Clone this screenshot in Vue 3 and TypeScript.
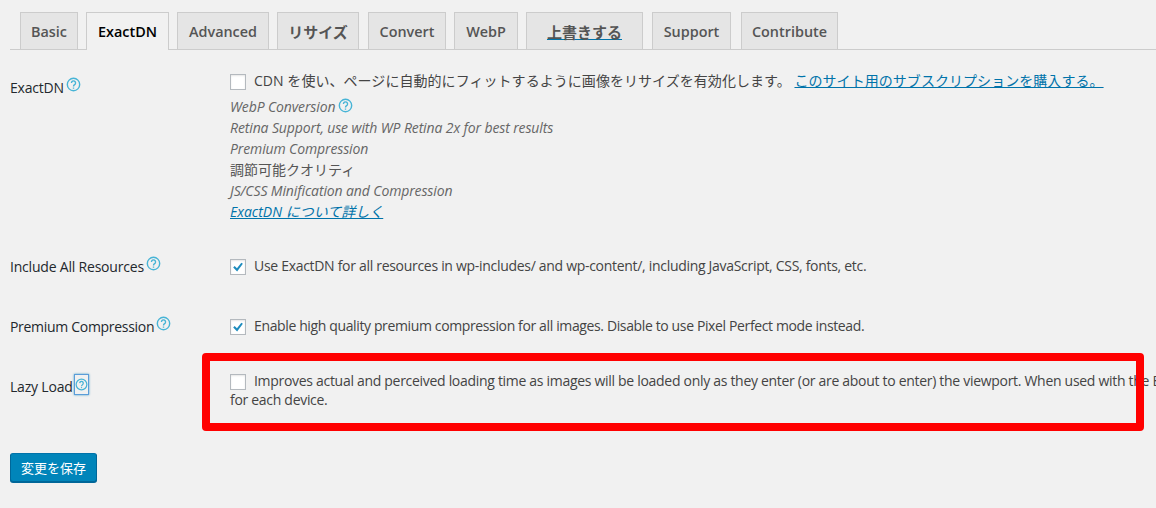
<script setup lang="ts">
interface Tab {
  name: string
  width: number
  after: number
}
const tabs: Tab[] = [
  { name: 'Basic', width: 58, after: 8 },
  { name: 'ExactDN', width: 83, after: 8 },
  { name: 'Advanced', width: 92, after: 8 },
  { name: 'リサイズ', width: 82, after: 9 },
  { name: 'Convert', width: 78, after: 8 },
  { name: 'WebP', width: 64, after: 8 },
  { name: '上書きする', width: 117, after: 9 },
  { name: 'Support', width: 79, after: 10 },
  { name: 'Contribute', width: 97, after: 0 },
]
</script>

<template>
  <div class="page">
    <nav class="tabs">
      <a
        v-for="t in tabs"
        :key="t.name"
        class="tab"
        :class="{ active: t.name === 'ExactDN', under: t.name === '上書きする', jp: t.name === 'リサイズ' || t.name === '上書きする' }"
        :style="{ width: t.width + 'px', marginRight: t.after + 'px' }"
      >{{ t.name }}</a>
    </nav>

    <section class="row exact">
      <div class="label drop7">ExactDN<svg class="help" viewBox="0 0 16 16"><circle cx="8" cy="8" r="6.6" /><path d="M5.8 6.3a2.2 2.2 0 1 1 3.4 1.9c-.8.5-1.2 1-1.2 1.9" /><path d="M8 11.2v1.3" /></svg></div>
      <div class="field">
        <p class="line first"><span class="box"></span>CDN を使い、ページに自動的にフィットするように画像をリサイズを有効化します。 <a class="link">このサイト用のサブスクリプションを購入する。</a></p>
        <p class="line em">WebP Conversion<svg class="help small" viewBox="0 0 16 16"><circle cx="8" cy="8" r="6.6" /><path d="M5.8 6.3a2.2 2.2 0 1 1 3.4 1.9c-.8.5-1.2 1-1.2 1.9" /><path d="M8 11.2v1.3" /></svg></p>
        <p class="line em">Retina Support, use with WP Retina 2x for best results</p>
        <p class="line em">Premium Compression</p>
        <p class="line soft">調節可能クオリティ</p>
        <p class="line em">JS/CSS Minification and Compression</p>
        <p class="line em plain"><a class="link">ExactDN について詳しく</a></p>
      </div>
    </section>

    <section class="row include">
      <div class="label">Include All Resources<svg class="help" viewBox="0 0 16 16"><circle cx="8" cy="8" r="6.6" /><path d="M5.8 6.3a2.2 2.2 0 1 1 3.4 1.9c-.8.5-1.2 1-1.2 1.9" /><path d="M8 11.2v1.3" /></svg></div>
      <div class="field">
        <p class="line latin"><span class="box"><svg class="check" viewBox="0 0 16 16"><path d="M2.5 8.5l1.7-1.7 2.6 2.6 5-6.4 1.8 1.4-6.6 8.6z" /></svg></span>Use ExactDN for all resources in wp-includes/ and wp-content/, including JavaScript, CSS, fonts, etc.</p>
      </div>
    </section>

    <section class="row premium">
      <div class="label narrow">Premium Compression<svg class="help" viewBox="0 0 16 16"><circle cx="8" cy="8" r="6.6" /><path d="M5.8 6.3a2.2 2.2 0 1 1 3.4 1.9c-.8.5-1.2 1-1.2 1.9" /><path d="M8 11.2v1.3" /></svg></div>
      <div class="field">
        <p class="line latin tighter"><span class="box"><svg class="check" viewBox="0 0 16 16"><path d="M2.5 8.5l1.7-1.7 2.6 2.6 5-6.4 1.8 1.4-6.6 8.6z" /></svg></span>Enable high quality premium compression for all images. Disable to use Pixel Perfect mode instead.</p>
      </div>
    </section>

    <section class="row lazy">
      <div class="label drop4">Lazy Load<span class="focus"><svg class="help flush" viewBox="0 0 16 16"><circle cx="8" cy="8" r="6.6" /><path d="M5.8 6.3a2.2 2.2 0 1 1 3.4 1.9c-.8.5-1.2 1-1.2 1.9" /><path d="M8 11.2v1.3" /></svg></span></div>
      <div class="field">
        <p class="line tight latin"><span class="box"></span>Improves actual and perceived loading time as images will be loaded only as they enter (or are about to enter) the viewport. When used with the ExactDN option, images are scaled</p>
        <p class="line tight latin">for each device.</p>
      </div>
      <div class="redbox"></div>
    </section>

    <button class="save" type="button">変更を保存</button>
  </div>
</template>

<style>
html, body {
  margin: 0;
  background: #f1f1f1;
  overflow: hidden;
}
</style>

<style scoped>
.page {
  width: 1156px;
  height: 508px;
  overflow: hidden;
  padding-top: 12px;
  box-sizing: border-box;
  background: #f1f1f1;
  color: #444;
  font-family: "Open Sans", "Noto Sans CJK JP", sans-serif;
  font-size: 14px;
}
.tabs {
  display: flex;
  height: 37px;
  margin-left: 10px;
  padding-left: 10px;
  border-bottom: 1px solid #ccc;
}
.tab {
  box-sizing: border-box;
  height: 37px;
  padding-top: 1px;
  display: flex;
  align-items: center;
  justify-content: center;
  background: #e5e5e5;
  border: 1px solid #ccc;
  border-bottom: 0;
  color: #555;
  font-size: 14.4px;
  font-weight: 600;
  line-height: 24px;
  white-space: nowrap;
}
.tab.jp { font-size: 15px; }
.tab.active {
  background: #f1f1f1;
  color: #000;
  height: 38px;
}
.tab.under {
  text-decoration: underline;
  text-decoration-color: #0073aa;
}
.row {
  display: grid;
  grid-template-columns: 220px 1fr;
  padding-left: 10px;
  position: relative;
}
.exact { margin-top: 19px; height: 160px; }
.include { margin-top: 26px; }
.premium { margin-top: 36px; }
.lazy { margin-top: 32px; }
.label {
  color: #23282d;
  font-size: 14px;
  letter-spacing: -0.2px;
  font-weight: 500;
  line-height: 24px;
  white-space: nowrap;
  display: flex;
  align-items: flex-start;
  height: 24px;
}
.label.narrow { letter-spacing: -0.3px; }
.drop7 { margin-top: 7px; }
.drop4 { margin-top: 4px; }
.help {
  width: 15px;
  height: 15px;
  margin: 1px 0 0 2px;
  fill: none;
  stroke: #47b4d6;
  stroke-width: 1.5;
  flex: none;
}
.help.small { margin: 0 0 0 3px; vertical-align: -1px; }
.help.flush { width: 13px; height: 13px; margin: 0; }
.focus {
  display: inline-flex;
  box-sizing: border-box;
  width: 15px;
  height: 21px;
  margin-top: -1px;
  margin-left: 1px;
  align-items: center;
  justify-content: center;
  border: 1px solid #5b9dd9;
  box-shadow: 0 0 2px rgba(30, 140, 190, 0.8);
}
.line {
  margin: 0;
  line-height: 21px;
  height: 21px;
  white-space: nowrap;
  color: #444;
}
.line.first { height: 27px; line-height: 24px; letter-spacing: 0.05px; }
.line.tight { height: 19px; line-height: 19px; }
.line.soft { color: #555; }
.latin { letter-spacing: -0.3px; }
.latin.tighter { letter-spacing: -0.37px; }
.em { font-style: italic; color: #666; letter-spacing: -0.12px; }
.plain { letter-spacing: 0; }
.box {
  display: inline-block;
  box-sizing: border-box;
  width: 16px;
  height: 16px;
  margin-right: 8px;
  vertical-align: -4px;
  background: #fff;
  border: 1px solid #b4b9be;
  box-shadow: inset 0 1px 2px rgba(0, 0, 0, 0.1);
}
.check {
  display: block;
  width: 14px;
  height: 14px;
  fill: #1e8cbe;
}
.link {
  color: #0073aa;
  text-decoration: underline;
}
.redbox {
  position: absolute;
  left: 202px;
  top: -18px;
  width: 942px;
  height: 78px;
  box-sizing: border-box;
  border: 8px solid #f00;
  border-radius: 4px;
  pointer-events: none;
}
.save {
  display: block;
  box-sizing: border-box;
  width: 87px;
  height: 29px;
  margin: 44px 0 0 10px;
  padding: 0;
  background: #0085ba;
  border: 1px solid;
  border-color: #0073aa #006799 #006799;
  border-radius: 3px;
  box-shadow: 0 1px 0 #006799;
  color: #fff;
  font-family: inherit;
  font-size: 13px;
}
</style>
